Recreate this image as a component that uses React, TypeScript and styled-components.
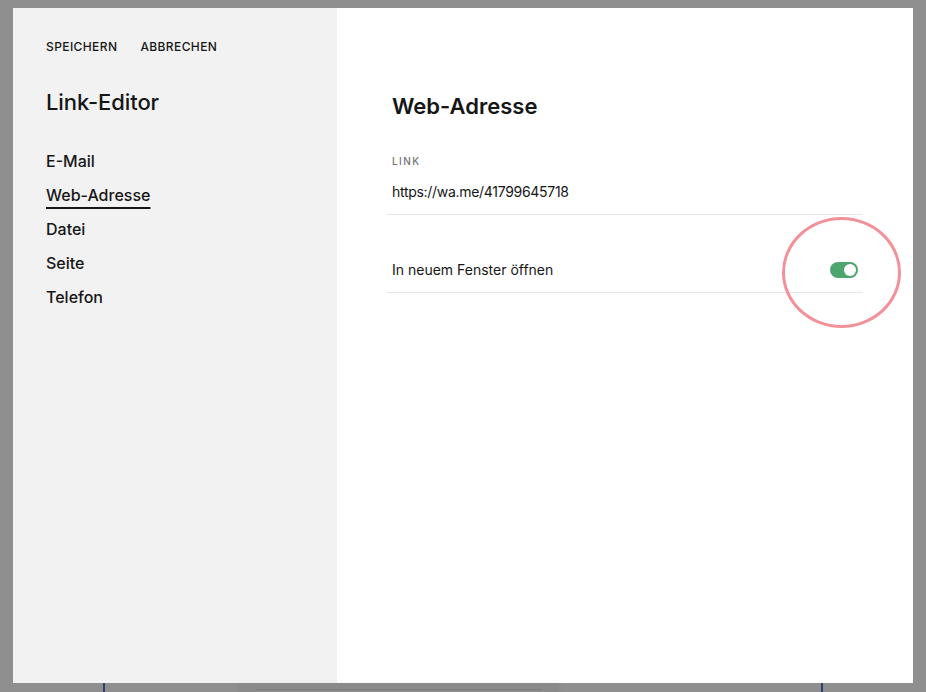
import styled, { createGlobalStyle } from 'styled-components'

const GlobalStyle = createGlobalStyle`
  html, body {
    margin: 0;
    padding: 0;
    background: #8f8f8f;
    font-family: Inter, "Noto Sans", "Liberation Sans", sans-serif;
    color: #161616;
    -webkit-font-smoothing: antialiased;
  }
  * { box-sizing: border-box; }
`

const Page = styled.div`
  width: 926px;
  height: 692px;
  overflow: hidden;
  display: flex;
  flex-direction: column;
`

const Dialog = styled.div`
  margin: 8px 13px 0;
  width: 900px;
  height: 675px;
  display: flex;
  background: #fff;
`

const Sidebar = styled.aside`
  width: 324px;
  background: #f2f2f2;
  padding: 31px 33px;
  display: flex;
  flex-direction: column;
`

const Actions = styled.div`
  display: flex;
  gap: 23px;
`

const ActionButton = styled.button`
  border: 0;
  background: none;
  padding: 0;
  font: inherit;
  font-size: 12px;
  line-height: 16px;
  font-weight: 500;
  letter-spacing: 0.4px;
  color: #161616;
  cursor: pointer;
`

const SideTitle = styled.h1`
  margin: 33px 0 0;
  font-size: 22px;
  line-height: 28px;
  font-weight: 500;
  letter-spacing: -0.1px;
`

const NavList = styled.nav`
  margin-top: 34px;
  display: flex;
  flex-direction: column;
  align-items: flex-start;
  gap: 12px;
`

const NavItem = styled.a<{ $active?: boolean }>`
  font-size: 16px;
  line-height: 22px;
  font-weight: 500;
  color: #161616;
  text-decoration: ${p => (p.$active ? 'underline' : 'none')};
  text-decoration-thickness: 2px;
  text-underline-offset: 6px;
  cursor: pointer;
`

const Content = styled.section`
  flex: 1;
  padding: 84px 50px 0;
  display: flex;
  flex-direction: column;
`

const Heading = styled.h2`
  margin: 0 5px;
  font-size: 22px;
  line-height: 28px;
  font-weight: 600;
`

const Field = styled.div`
  margin-top: 34px;
  padding: 0 5px 12px;
  border-bottom: 1px solid #e6e6e6;
  display: flex;
  flex-direction: column;
  gap: 14px;
`

const FieldLabel = styled.label`
  font-size: 10px;
  line-height: 14px;
  font-weight: 500;
  letter-spacing: 1.4px;
  color: #737373;
`

const FieldValue = styled.div`
  font-size: 14px;
  line-height: 20px;
  letter-spacing: -0.3px;
  color: #161616;
`

const ToggleRow = styled.div`
  padding: 45px 5px 12px;
  border-bottom: 1px solid #e6e6e6;
  display: flex;
  align-items: center;
  justify-content: space-between;
`

const RowText = styled.span`
  font-size: 14px;
  line-height: 20px;
`

const SwitchWrap = styled.div`
  position: relative;
  width: 28px;
  height: 16px;
`

const Switch = styled.div<{ $on: boolean }>`
  width: 28px;
  height: 16px;
  border-radius: 8px;
  background: ${p => (p.$on ? '#4ea66f' : '#c9c9c9')};
  display: flex;
  align-items: center;
  justify-content: ${p => (p.$on ? 'flex-end' : 'flex-start')};
  padding: 0 2px;
`

const Knob = styled.span`
  width: 12px;
  height: 12px;
  border-radius: 50%;
  background: #fff;
`

const Highlight = styled.span`
  position: absolute;
  left: -48px;
  top: -45px;
  width: 119px;
  height: 111px;
  border: 3px solid #f3919a;
  border-radius: 50%;
  pointer-events: none;
`

const BehindStrip = styled.div`
  flex: 1;
  display: flex;
  padding-left: 103px;
`

const BlueRule = styled.span<{ $gapAfter: number }>`
  width: 2px;
  background: #2f3f6e;
  margin-right: ${p => p.$gapAfter}px;
`

const GhostCard = styled.div`
  width: 320px;
  background: #8a8a8a;
  box-shadow: 0 0 6px rgba(0, 0, 0, 0.04);
  padding: 6px 17px 0;
  margin-right: 262px;
`

const GhostLine = styled.div`
  height: 1px;
  background: #7b7b7b;
`

const navItems = ['E-Mail', 'Web-Adresse', 'Datei', 'Seite', 'Telefon']

const App = () => {
  return (
    <>
      <GlobalStyle />
      <Page>
        <Dialog>
          <Sidebar>
            <Actions>
              <ActionButton>SPEICHERN</ActionButton>
              <ActionButton>ABBRECHEN</ActionButton>
            </Actions>
            <SideTitle>Link-Editor</SideTitle>
            <NavList>
              {navItems.map(item => (
                <NavItem key={item} $active={item === 'Web-Adresse'}>
                  {item}
                </NavItem>
              ))}
            </NavList>
          </Sidebar>
          <Content>
            <Heading>Web-Adresse</Heading>
            <Field>
              <FieldLabel>LINK</FieldLabel>
              <FieldValue>https://wa.me/41799645718</FieldValue>
            </Field>
            <ToggleRow>
              <RowText>In neuem Fenster öffnen</RowText>
              <SwitchWrap>
                <Switch $on>
                  <Knob />
                </Switch>
                <Highlight />
              </SwitchWrap>
            </ToggleRow>
          </Content>
        </Dialog>
        <BehindStrip>
          <BlueRule $gapAfter={134} />
          <GhostCard>
            <GhostLine />
          </GhostCard>
          <BlueRule $gapAfter={0} />
        </BehindStrip>
      </Page>
    </>
  )
}

export default App
